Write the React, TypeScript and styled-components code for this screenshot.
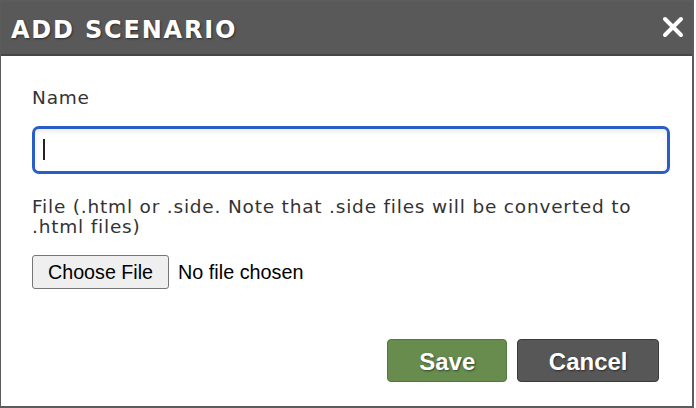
import styled, { createGlobalStyle } from "styled-components";

const GlobalStyle = createGlobalStyle`
  html, body {
    margin: 0;
    padding: 0;
    background: #ffffff;
  }
  * {
    box-sizing: border-box;
  }
`;

export default function App() {
  return (
    <>
      <GlobalStyle />
      <Dialog>
        <Header>
          <Title>ADD SCENARIO</Title>
          <CloseButton aria-label="Close">
            <svg width="22" height="22" viewBox="0 0 22 22">
              <path
                d="M3 3 L19 19 M19 3 L3 19"
                stroke="#ffffff"
                strokeWidth="4"
                strokeLinecap="round"
              />
            </svg>
          </CloseButton>
        </Header>

        <Body>
          <Field>
            <Label>Name</Label>
            <InputWrap>
              <TextInput />
              <Caret />
            </InputWrap>
          </Field>

          <Field>
            <Label>
              File (.html or .side. Note that .side files will be converted to
              .html files)
            </Label>
            <FileRow>
              <ChooseButton type="button">Choose File</ChooseButton>
              <FileStatus>No file chosen</FileStatus>
            </FileRow>
          </Field>
        </Body>

        <Footer>
          <ActionButton $variant="save">Save</ActionButton>
          <ActionButton $variant="cancel">Cancel</ActionButton>
        </Footer>
      </Dialog>
    </>
  );
}

const Dialog = styled.div`
  width: 694px;
  height: 408px;
  display: flex;
  flex-direction: column;
  background: #ffffff;
  border: 2px solid #5c5c5c;
  border-left-width: 1px;
`;

const Header = styled.div`
  height: 54px;
  display: flex;
  align-items: center;
  justify-content: space-between;
  padding: 3px 6px 0 10px;
  background: #595959;
  border-bottom: 2px solid #474747;
`;

const Title = styled.h1`
  margin: 0;
  color: #ffffff;
  font-family: "DejaVu Sans", Verdana, sans-serif;
  font-weight: bold;
  font-size: 24px;
  letter-spacing: 1.8px;
  text-shadow: 1px 1px 2px rgba(0, 0, 0, 0.5);
`;

const CloseButton = styled.button`
  display: flex;
  align-items: center;
  justify-content: center;
  width: 26px;
  height: 26px;
  margin-top: -5px;
  padding: 0;
  border: none;
  background: transparent;
  cursor: pointer;
`;

const Body = styled.div`
  display: flex;
  flex-direction: column;
  gap: 23px;
  padding: 32px 22px 0 31px;
`;

const Field = styled.div`
  display: flex;
  flex-direction: column;
`;

const Label = styled.label`
  color: #333333;
  font-family: "DejaVu Sans", Verdana, sans-serif;
  font-size: 18.5px;
  letter-spacing: 0.8px;
  line-height: 20px;
  margin-bottom: 18px;
`;

const InputWrap = styled.div`
  position: relative;
`;

const TextInput = styled.input`
  display: block;
  width: 100%;
  height: 48px;
  padding: 0 10px;
  border: 3px solid #2a5ec6;
  border-radius: 7px;
  box-shadow: inset 0 3px 4px rgba(0, 0, 0, 0.07);
  font-family: "DejaVu Sans", Verdana, sans-serif;
  font-size: 18px;
  color: #333333;
  outline: none;
`;

const Caret = styled.span`
  position: absolute;
  left: 11px;
  top: 13px;
  width: 2px;
  height: 21px;
  background: #222222;
`;

const FileRow = styled.div`
  display: flex;
  align-items: center;
  gap: 9px;
`;

const ChooseButton = styled.button`
  height: 34px;
  padding: 0 15px;
  border: 1px solid #767676;
  border-radius: 3px;
  background: #efefef;
  color: #000000;
  font-family: "Liberation Sans", Arial, sans-serif;
  font-size: 19.7px;
  cursor: pointer;
`;

const FileStatus = styled.span`
  color: #000000;
  font-family: "Liberation Sans", Arial, sans-serif;
  font-size: 19.8px;
`;

const Footer = styled.div`
  margin-top: auto;
  display: flex;
  justify-content: flex-end;
  gap: 10px;
  padding: 0 33px 24px 0;
`;

const ActionButton = styled.button<{ $variant: "save" | "cancel" }>`
  height: 43px;
  padding: 3px ${(p) => (p.$variant === "save" ? 31 : 30.5)}px 0;
  border-radius: 4px;
  border: 1px solid
    ${(p) => (p.$variant === "save" ? "#4f7a3c" : "#3a3a3a")};
  background: ${(p) => (p.$variant === "save" ? "#678c4e" : "#575757")};
  color: #ffffff;
  font-family: "Liberation Sans", Arial, sans-serif;
  font-weight: bold;
  font-size: 24px;
  text-shadow: 1px 1px 2px rgba(0, 0, 0, 0.5);
  cursor: pointer;
`;
